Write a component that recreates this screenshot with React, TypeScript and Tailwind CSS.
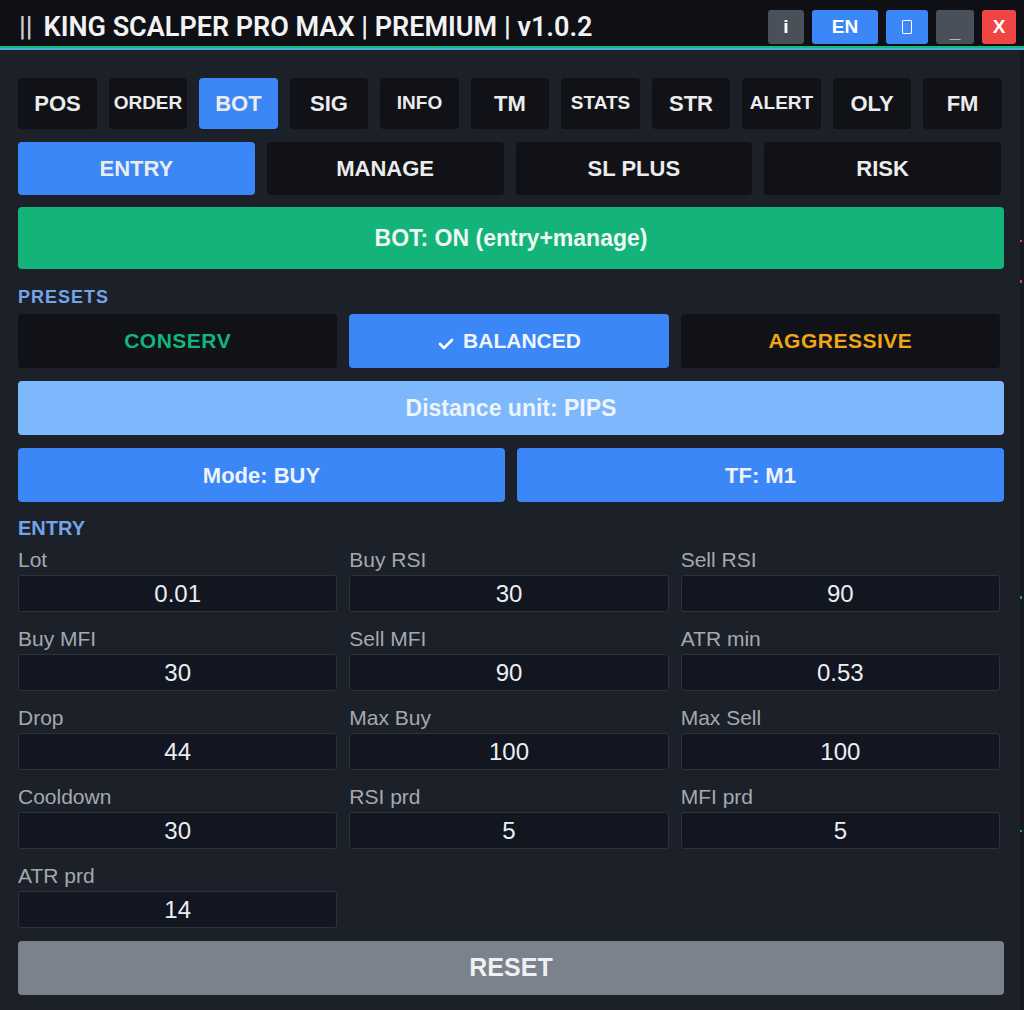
import React from "react";

const mainTabs = ["POS", "ORDER", "BOT", "SIG", "INFO", "TM", "STATS", "STR", "ALERT", "OLY", "FM"];
const smallTabs = new Set(["ORDER", "STATS", "ALERT", "INFO"]);
const subTabs = ["ENTRY", "MANAGE", "SL PLUS", "RISK"];

const fields: [string, string][] = [
  ["Lot", "0.01"],
  ["Buy RSI", "30"],
  ["Sell RSI", "90"],
  ["Buy MFI", "30"],
  ["Sell MFI", "90"],
  ["ATR min", "0.53"],
  ["Drop", "44"],
  ["Max Buy", "100"],
  ["Max Sell", "100"],
  ["Cooldown", "30"],
  ["RSI prd", "5"],
  ["MFI prd", "5"],
  ["ATR prd", "14"],
];

function TitleButton({ label, cls }: { label: React.ReactNode; cls: string }) {
  return (
    <div className={`h-[34px] rounded-[3px] flex items-center justify-center text-white text-[19px] font-semibold ${cls}`}>
      {label}
    </div>
  );
}

export default function App() {
  return (
    <div
      className="w-[1024px] h-[1010px] bg-[#1b2029] flex flex-col overflow-hidden"
      style={{ fontFamily: "'Liberation Sans', Arial, sans-serif" }}
    >
      {/* title bar */}
      <div className="h-[46px] bg-[#0e1016] flex items-center pl-[19px] pr-[8px] pt-[8px]">
        <div
          className="flex-1 text-[27px] font-semibold text-[#f2f2f2] leading-none"
          style={{ fontFamily: "Roboto, 'Liberation Sans', sans-serif" }}
        >
          <span className="text-[#cfcfcf] mr-[11px]">||</span>
          KING SCALPER PRO MAX | PREMIUM | v1.0.2
        </div>
        <div className="flex items-center gap-[8px]">
          <TitleButton label="i" cls="w-[36px] bg-[#4a5059]" />
          <TitleButton label="EN" cls="w-[66px] bg-[#3b87f7] text-[18px]" />
          <TitleButton
            label={<span className="block w-[10px] h-[14px] border-[1.5px] border-white rounded-[1px]" />}
            cls="w-[42px] bg-[#3b87f7]"
          />
          <TitleButton label={<span className="pt-[10px]">_</span>} cls="w-[38px] bg-[#4a5059]" />
          <TitleButton label="X" cls="w-[34px] bg-[#f04545]" />
        </div>
      </div>
      <div className="h-[2px] bg-[#12b981]" />
      <div className="h-[2px] bg-[#4aaed6]" />

      <div className="flex-1 flex">
        <div className="flex-1 flex flex-col pl-[18px] pr-[16px] pt-[28px]">
          {/* main tabs */}
          <div className="grid grid-cols-11 gap-[11.6px] pr-[2px]">
            {mainTabs.map((t) => (
              <div
                key={t}
                className={`h-[51px] rounded-[4px] flex items-center justify-center font-bold text-[#ececec] ${
                  t === "BOT" ? "bg-[#3b87f7]" : "bg-[#101218]"
                } ${smallTabs.has(t) ? "text-[19px]" : "text-[22px]"}`}
              >
                {t}
              </div>
            ))}
          </div>

          {/* sub tabs */}
          <div className="grid grid-cols-4 gap-[12px] mt-[13px] pr-[3px]">
            {subTabs.map((t) => (
              <div
                key={t}
                className={`h-[53px] rounded-[4px] flex items-center justify-center font-bold text-[22px] text-[#ececec] ${
                  t === "ENTRY" ? "bg-[#3b87f7]" : "bg-[#101218]"
                }`}
              >
                {t}
              </div>
            ))}
          </div>

          {/* bot state */}
          <div className="mt-[12px] h-[62px] rounded-[4px] bg-[#13b37a] flex items-center justify-center text-[23px] font-bold text-[#eef7f2]">
            BOT: ON (entry+manage)
          </div>

          <div className="mt-[18px] h-[20px] leading-[20px] text-[18px] font-bold text-[#74a4e6] tracking-[1px]">
            PRESETS
          </div>

          {/* presets */}
          <div className="grid grid-cols-3 gap-[12px] mt-[7px] pr-[4px]">
            <div className="h-[54px] rounded-[4px] bg-[#101218] flex items-center justify-center text-[21px] font-bold text-[#14b57a] tracking-[0.5px]">
              CONSERV
            </div>
            <div className="h-[54px] rounded-[4px] bg-[#3b87f7] flex items-center justify-center text-[21px] font-bold text-[#f2f5fa]">
              <svg width="18" height="18" viewBox="0 0 18 18" className="mr-[8px] mt-[6px]">
                <polyline points="3,9 7,13 15,5" fill="none" stroke="#ffffff" strokeWidth="2.6" strokeLinecap="round" strokeLinejoin="round" />
              </svg>
              BALANCED
            </div>
            <div className="h-[54px] rounded-[4px] bg-[#101218] flex items-center justify-center text-[21px] font-bold text-[#f2a516] tracking-[0.5px]">
              AGGRESSIVE
            </div>
          </div>

          {/* distance unit */}
          <div className="mt-[13px] h-[54px] rounded-[4px] bg-[#7db8fd] flex items-center justify-center text-[23px] font-bold text-[#eef4fb]">
            Distance unit: PIPS
          </div>

          {/* mode + tf */}
          <div className="grid grid-cols-2 gap-[12px] mt-[13px]">
            <div className="h-[54px] rounded-[4px] bg-[#3b87f7] flex items-center justify-center text-[22px] font-bold text-[#eef3fb]">
              Mode: BUY
            </div>
            <div className="h-[54px] rounded-[4px] bg-[#3b87f7] flex items-center justify-center text-[22px] font-bold text-[#eef3fb]">
              TF: M1
            </div>
          </div>

          <div className="mt-[16px] h-[20px] leading-[20px] text-[20px] font-bold text-[#74a4e6]">ENTRY</div>

          {/* entry fields */}
          <div className="grid grid-cols-3 gap-x-[12px] gap-y-[17px] mt-[12px] pr-[4px]">
            {fields.map(([label, value]) => (
              <div key={label} className="flex flex-col">
                <div className="h-[20px] leading-[20px] text-[21px] text-[#a4a9b1]">{label}</div>
                <div className="mt-[5px] h-[37px] rounded-[3px] bg-[#111620] border border-[#2c323c] flex items-center justify-center text-[24px] text-[#eceef2]">
                  {value}
                </div>
              </div>
            ))}
          </div>

          {/* reset */}
          <div className="mt-[13px] h-[54px] rounded-[4px] bg-[#7b828b] flex items-center justify-center text-[25px] font-bold text-[#eef0f2]">
            RESET
          </div>
        </div>

        {/* chart edge behind the panel */}
        <div className="relative w-[4px] bg-[#141820]">
          <span className="absolute left-0 top-[190px] w-[2px] h-[2px] bg-[#d04848]" />
          <span className="absolute left-0 top-[230px] w-[2px] h-[3px] bg-[#d04848]" />
          <span className="absolute left-0 top-[546px] w-[2px] h-[3px] bg-[#1f9e6f]" />
          <span className="absolute left-0 top-[780px] w-[2px] h-[2px] bg-[#1f9e6f]" />
        </div>
      </div>
    </div>
  );
}
